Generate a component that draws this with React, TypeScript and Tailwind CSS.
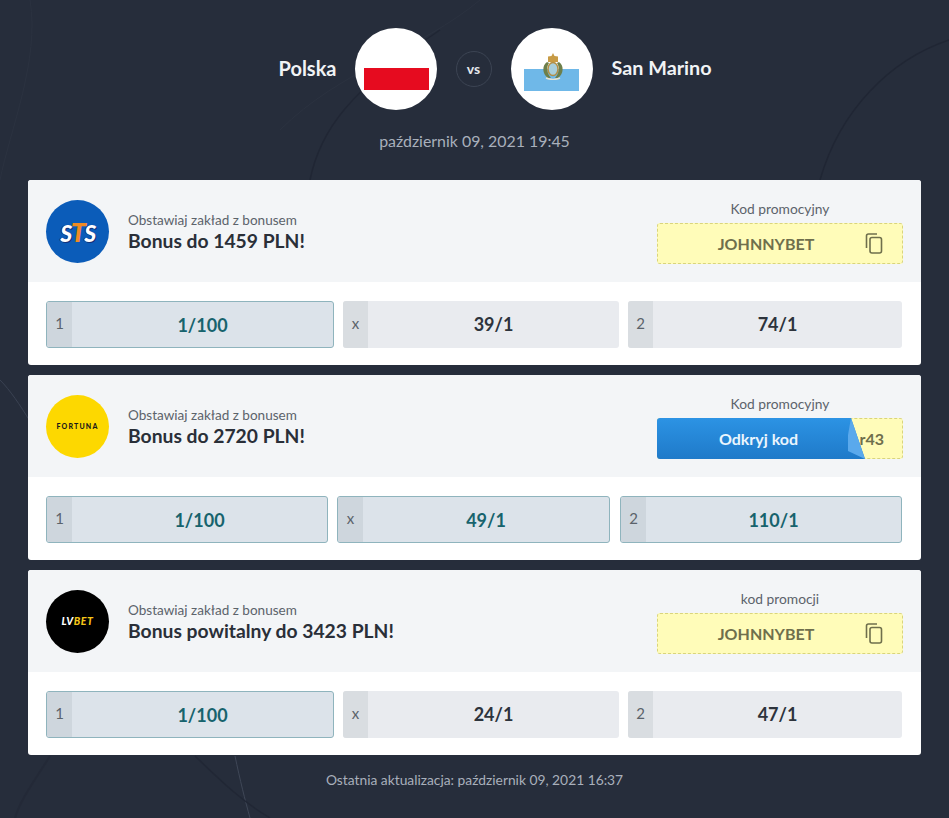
const font = { fontFamily: 'Lato, "Open Sans", sans-serif' }

interface Odd {
  label: string
  value: string
  selected: boolean
  width: string
}

interface Offer {
  logo: 'sts' | 'fortuna' | 'lvbet'
  title: string
  codeLabel: string
  hidden: boolean
  odds: Odd[]
}

const OFFERS: Offer[] = [
  {
    logo: 'sts',
    title: 'Bonus do 1459 PLN!',
    codeLabel: 'Kod promocyjny',
    hidden: false,
    odds: [
      { label: '1', value: '1/100', selected: true, width: 'w-[288px]' },
      { label: 'x', value: '39/1', selected: false, width: 'w-[276px]' },
      { label: '2', value: '74/1', selected: false, width: 'w-[274px]' },
    ],
  },
  {
    logo: 'fortuna',
    title: 'Bonus do 2720 PLN!',
    codeLabel: 'Kod promocyjny',
    hidden: true,
    odds: [
      { label: '1', value: '1/100', selected: true, width: 'w-[282px]' },
      { label: 'x', value: '49/1', selected: true, width: 'w-[273px]' },
      { label: '2', value: '110/1', selected: true, width: 'w-[282px] ml-[1px]' },
    ],
  },
  {
    logo: 'lvbet',
    title: 'Bonus powitalny do 3423 PLN!',
    codeLabel: 'kod promocji',
    hidden: false,
    odds: [
      { label: '1', value: '1/100', selected: true, width: 'w-[288px]' },
      { label: 'x', value: '24/1', selected: false, width: 'w-[276px]' },
      { label: '2', value: '47/1', selected: false, width: 'w-[274px]' },
    ],
  },
]

function Backdrop() {
  return (
    <svg className="absolute inset-0 w-full h-full pointer-events-none" viewBox="0 0 949 818" fill="none">
      <path d="M0 380 C 20 400 40 440 60 470" stroke="#3a4252" strokeWidth="1" />
      <path d="M440 30 C 350 90 320 130 310 180" stroke="#202634" strokeWidth="1.5" />
      <path d="M820 180 C 840 110 890 60 949 40" stroke="#202634" strokeWidth="1.5" />
      <path d="M235 756 C 240 780 245 800 250 818" stroke="#3f4757" strokeWidth="1" />
      <path d="M195 756 C 220 780 240 800 270 818" stroke="#212735" strokeWidth="1.5" />
      <path d="M50 756 C 35 780 20 800 15 818" stroke="#232937" strokeWidth="2" />
      <path d="M480 0 C 420 50 340 70 280 130" stroke="#2b3240" strokeWidth="1" />
      <path d="M0 180 C 10 130 40 60 30 0" stroke="#2b3240" strokeWidth="1" />
    </svg>
  )
}

function SanMarinoFlag() {
  return (
    <div className="w-[82px] h-[82px] rounded-full bg-white relative flex items-end justify-center pb-[19px]">
      <div className="w-[55px] h-[22px] bg-[#6fb8e8]" />
      <svg className="absolute left-[31px] top-[25px]" width="22" height="27" viewBox="0 0 22 27">
        <path d="M11 0 L12.5 3 L16 3.5 L16 9 L6 9 L6 3.5 L9.5 3 Z" fill="#c79b45" />
        <path d="M5 9 C 0 12 0 21 6 25 L9 25 C 5 21 4 14 7 10 Z" fill="#6d7f4a" />
        <path d="M17 9 C 22 12 22 21 16 25 L13 25 C 17 21 18 14 15 10 Z" fill="#6d7f4a" />
        <ellipse cx="11" cy="16" rx="5" ry="6.5" fill="#a9cfdc" stroke="#b38f45" strokeWidth="1.5" />
        <path d="M4 25 Q11 28 18 25" stroke="#e6e2d2" strokeWidth="1.5" fill="none" />
      </svg>
    </div>
  )
}

function Logo({ kind }: { kind: Offer['logo'] }) {
  if (kind === 'sts') {
    return (
      <div className="w-[63px] h-[63px] rounded-full bg-[#0b5cb9] flex items-center justify-center">
        <span className="text-[23px] font-black italic leading-none tracking-[-1.5px] text-white [text-shadow:1px_1px_0_#12307a,-1px_0_0_#12307a]">
          S<span className="text-[27px] text-[#f08a24] [text-shadow:none]">T</span>S
        </span>
      </div>
    )
  }
  if (kind === 'fortuna') {
    return (
      <div className="w-[63px] h-[63px] rounded-full bg-[#fdd800] flex items-center justify-center">
        <span className="text-[7px] font-black leading-none tracking-[1.2px] text-[#1a1a1a]">FORTUNA</span>
      </div>
    )
  }
  return (
    <div className="w-[63px] h-[63px] rounded-full bg-black flex items-center justify-center">
      <span className="text-[10.5px] font-black italic leading-none tracking-[0.6px] text-white">
        LV<span className="text-[#f5c518]">BET</span>
      </span>
    </div>
  )
}

function CopyIcon() {
  return (
    <svg width="18" height="21" viewBox="0 0 18 21" fill="none" stroke="#6f6f4c" strokeWidth="1.6">
      <path d="M1.5 15 V3 Q1.5 1 3.5 1 H12" />
      <rect x="5" y="4.5" width="11.5" height="15.5" rx="2" />
    </svg>
  )
}

function CodeBox({ offer }: { offer: Offer }) {
  return (
    <div className="w-[246px] pt-[2px] flex flex-col items-center">
      <div className="text-[13.8px] leading-[18px] mb-[5px] text-[#5c636b]">{offer.codeLabel}</div>
      <div className="relative w-full h-[41px] border border-dashed border-[#d9d47c] rounded-[3px] bg-[#fffcb9] flex items-center justify-center">
        {offer.hidden ? (
          <>
            <span className="ml-auto mr-[18px] text-[16px] font-bold text-[#6f6f4c]">r43</span>
            <div className="absolute -left-px -top-px w-[208px] h-[41px] rounded-l-[3px] bg-gradient-to-b from-[#2c93e4] to-[#1f7ac9] [clip-path:polygon(0_0,194px_0,208px_100%,0_100%)] flex items-center justify-center pr-[5px]">
              <span className="text-[16px] font-bold text-[#eaf5fd]">Odkryj kod</span>
            </div>
            <div className="absolute left-[190px] -top-px w-[19px] h-[41px] bg-[#5aa9ec] [clip-path:polygon(3px_0,17px_100%,0_33px,0_17px)]" />
          </>
        ) : (
          <>
            <span className="text-[16px] font-bold text-[#6f6f4c] mr-[28px]">JOHNNYBET</span>
            <div className="absolute right-[19px] top-[9px]">
              <CopyIcon />
            </div>
          </>
        )}
      </div>
    </div>
  )
}

function OddCell({ odd }: { odd: Odd }) {
  return (
    <div
      className={`${odd.width} h-[47px] rounded-[3px] flex overflow-hidden ${
        odd.selected ? 'bg-[#dce3ea] border border-[#8fb4bd]' : 'bg-[#e9ebef]'
      }`}
    >
      <div
        className={`w-[25px] flex items-center justify-center pb-[2px] text-[15px] text-[#5b636b] ${
          odd.selected ? 'bg-[#ced6dd]' : 'bg-[#d9dde1]'
        }`}
      >
        {odd.label}
      </div>
      <div
        className={`flex-1 flex items-center justify-center text-[18px] font-bold ${
          odd.selected ? 'text-[#17636d] pt-[1px]' : 'text-[#2d333c]'
        }`}
      >
        {odd.value}
      </div>
    </div>
  )
}

function OfferCard({ offer }: { offer: Offer }) {
  return (
    <div className="h-[185px] rounded-[3px] bg-white overflow-hidden flex flex-col">
      <div className="h-[102px] bg-[#f3f5f7] pl-[18px] pr-[18px] flex items-center">
        <Logo kind={offer.logo} />
        <div className="ml-[19px] flex-1 pt-[3px]">
          <div className="text-[13.55px] leading-[16px] text-[#5c636b]">Obstawiaj zakład z bonusem</div>
          <div className="mt-[1px] text-[19.3px] leading-[24px] font-bold text-[#2a2f38]">{offer.title}</div>
        </div>
        <CodeBox offer={offer} />
      </div>
      <div className="flex-1 pl-[18px] pt-[19px] flex gap-[9px]">
        {offer.odds.map((odd) => (
          <OddCell key={odd.label} odd={odd} />
        ))}
      </div>
    </div>
  )
}

export default function App() {
  return (
    <div className="relative w-[949px] h-[818px] overflow-hidden bg-[#262d3b]" style={font}>
      <Backdrop />
      <div className="relative px-[28px] pt-[28px]">
        <div className="flex items-center justify-center gap-[19px] mr-[2px]">
          <div className="flex-1 text-right pb-[2px] text-[20px] font-bold text-[#f1f3f5]">
            <span className="inline-block -mr-px">Polska</span>
          </div>
          <div className="w-[82px] h-[82px] rounded-full bg-white flex items-end justify-center pb-[20px] pl-[1px]">
            <div className="w-[65px] h-[22px] bg-[#e60b1f]" />
          </div>
          <div className="w-[36px] h-[36px] rounded-full border border-[#3c4453] flex items-center justify-center pb-[2px] text-[14px] font-bold text-[#e5e8ec]">
            vs
          </div>
          <SanMarinoFlag />
          <div className="flex-1 text-left pb-[2px] text-[19.8px] font-bold text-[#f1f3f5]">San Marino</div>
        </div>
        <div className="mt-[20px] mb-[28px] h-[22px] leading-[22px] text-center text-[15.9px] text-[#a9b0bb]">
          październik 09, 2021 19:45
        </div>
        <div className="flex flex-col gap-[10px]">
          {OFFERS.map((offer) => (
            <OfferCard key={offer.logo} offer={offer} />
          ))}
        </div>
        <div className="mt-[16px] text-center text-[13.8px] leading-[18px] text-[#a9b0bb]">
          Ostatnia aktualizacja: październik 09, 2021 16:37
        </div>
      </div>
    </div>
  )
}
